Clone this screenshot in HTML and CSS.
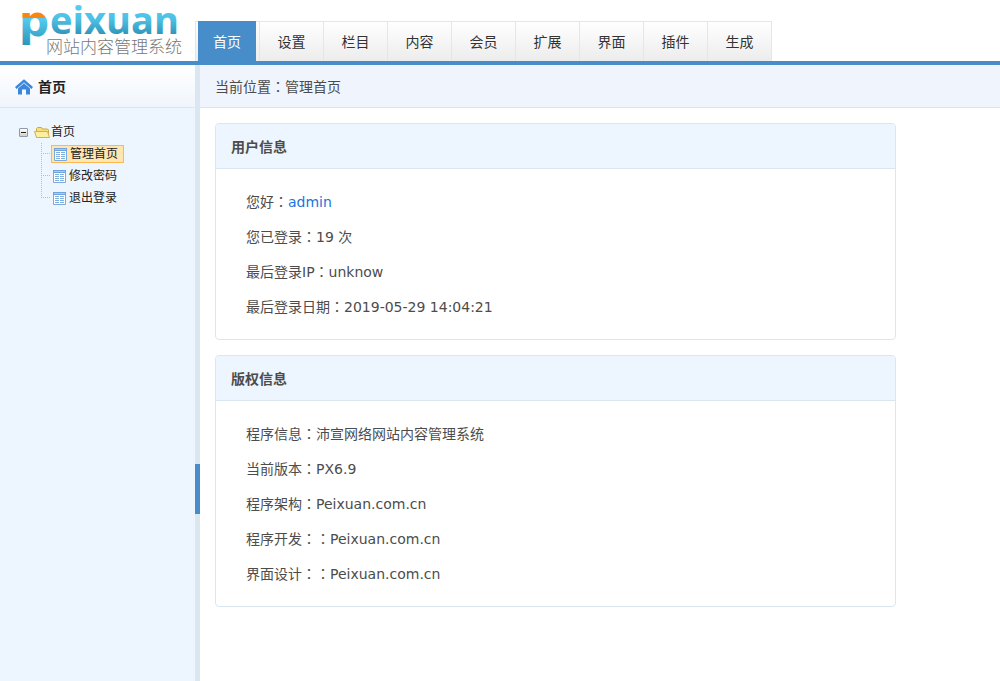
FILE: index.html
```html
<!DOCTYPE html>
<html lang="zh-CN">
<head>
<meta charset="utf-8">
<meta name="viewport" content="width=device-width, initial-scale=1">
<title>网站内容管理系统</title>
<link rel="stylesheet" href="styles.css">
</head>
<body>
<header class="top">
  <div class="brand">
    <svg class="logo" width="195" height="61" viewBox="0 0 195 61" role="img" aria-label="Peixuan 网站内容管理系统">
      <defs>
        <linearGradient id="blue" gradientUnits="userSpaceOnUse" x1="0" y1="6" x2="0" y2="45">
          <stop offset="0" stop-color="#55cdf0"/><stop offset="0.35" stop-color="#4cc0e4"/><stop offset="0.75" stop-color="#2f93b4"/><stop offset="1" stop-color="#389fc2"/>
        </linearGradient>
        <linearGradient id="lead" gradientUnits="userSpaceOnUse" x1="0" y1="12" x2="0" y2="46">
          <stop offset="0" stop-color="#fb8512"/><stop offset="0.17" stop-color="#fb8512"/><stop offset="0.17" stop-color="#55cdf0"/><stop offset="1" stop-color="#2c93b8"/>
        </linearGradient>
      </defs>
      <text class="logo-lead" x="19" y="36" fill="url(#lead)">p</text>
      <text class="logo-name" x="50" y="34" fill="url(#blue)">eixuan</text>
      <text class="logo-sub" x="46" y="53">网站内容管理系统</text>
    </svg>
  </div>
  <nav class="tabs">
    <a class="tab active" href="#">首页</a>
    <a class="tab" href="#">设置</a>
    <a class="tab" href="#">栏目</a>
    <a class="tab" href="#">内容</a>
    <a class="tab" href="#">会员</a>
    <a class="tab" href="#">扩展</a>
    <a class="tab" href="#">界面</a>
    <a class="tab" href="#">插件</a>
    <a class="tab" href="#">生成</a>
  </nav>
</header>
<svg width="0" height="0" class="symbols" aria-hidden="true">
  <symbol id="page" viewBox="0 0 13 13">
    <path fill="#fff" stroke="#7da9dc" d="M.5.5h12v12H.5z"/>
    <path fill="#6fa3dd" d="M0 0h13v3H0z"/><path fill="#a9ccf2" d="M1 1h11v1H1z"/>
    <path stroke="#7fb0e2" d="M2 4.500h4M7 4.500h4M2 6.500h4M7 6.500h4M2 8.500h4M7 8.500h4M2 10.500h4M7 10.500h4"/>
  </symbol>
</svg>
<div class="frame">
  <aside class="side">
    <h2 class="side-title">
      <svg width="18" height="16" viewBox="0 0 18 16" aria-hidden="true"><path fill="none" stroke="#3a87dc" stroke-width="2.400" d="M.8 9 9 1.800 17.200 9"/><path fill="#3a87dc" d="M3 9.500 9 4.300l6 5.200V15a.6.6 0 0 1-.6.6H11v-5H7v5H3.600A.6.6 0 0 1 3 15z"/></svg>
      首页
    </h2>
    <div class="tree">
      <div class="root">
        <button class="toggle" type="button" aria-label="折叠" aria-expanded="true"></button>
        <a class="root-link" href="#">
          <svg width="16" height="13" viewBox="0 0 16 13" aria-hidden="true"><path fill="#f6de79" stroke="#cba944" d="M2.500 11.500V2.500l1-1h4l1 1.500h5l1 1v7.500z"/><path fill="#fdeea0" stroke="#d2b04c" d="M.5 5.500h13l2 6h-13z"/></svg>
          首页
        </a>
      </div>
      <ul class="branch">
        <li><a class="leaf current" href="#"><svg width="13" height="13" aria-hidden="true"><use href="#page"/></svg>管理首页</a></li>
        <li><a class="leaf" href="#"><svg width="13" height="13" aria-hidden="true"><use href="#page"/></svg>修改密码</a></li>
        <li><a class="leaf" href="#"><svg width="13" height="13" aria-hidden="true"><use href="#page"/></svg>退出登录</a></li>
      </ul>
    </div>
  </aside>
  <div class="splitter"><button class="grip" type="button" aria-label="收起侧栏"></button></div>
  <main class="main">
    <div class="crumb">当前位置<span class="colon" lang="zh-TW">：</span>管理首页</div>
    <div class="panels">
      <section class="panel">
        <h3 class="panel-title">用户信息</h3>
        <div class="panel-body">
          <p>您好<span class="colon" lang="zh-TW">：</span><a class="user" href="#">admin</a></p>
          <p>您已登录<span class="colon" lang="zh-TW">：</span>19 次</p>
          <p>最后登录IP<span class="colon" lang="zh-TW">：</span>unknow</p>
          <p>最后登录日期<span class="colon" lang="zh-TW">：</span>2019-05-29 14:04:21</p>
        </div>
      </section>
      <section class="panel">
        <h3 class="panel-title">版权信息</h3>
        <div class="panel-body">
          <p>程序信息<span class="colon" lang="zh-TW">：</span>沛宣网络网站内容管理系统</p>
          <p>当前版本<span class="colon" lang="zh-TW">：</span>PX6.9</p>
          <p>程序架构<span class="colon" lang="zh-TW">：</span>Peixuan.com.cn</p>
          <p>程序开发<span class="colon" lang="zh-TW">：：</span>Peixuan.com.cn</p>
          <p>界面设计<span class="colon" lang="zh-TW">：：</span>Peixuan.com.cn</p>
        </div>
      </section>
    </div>
  </main>
</div>
</body>
</html>
```
FILE: styles.css
```css
* { box-sizing: border-box; }
body {
  margin: 0;
  min-height: 100vh;
  display: flex;
  flex-direction: column;
  background: #fff;
  color: #4c4c4c;
  font: 14px/20px "DejaVu Sans", "Noto Sans CJK SC", sans-serif;
  text-spacing-trim: space-all;
}
h2, h3, p, ul { margin: 0; padding: 0; }
h2, h3 { font-size: 14px; }
a { color: inherit; text-decoration: none; }
button { padding: 0; border: 0; }
svg { flex: none; }
.symbols { position: absolute; }
.colon { font-family: "Noto Sans CJK TC", sans-serif; line-height: 1; }

.top {
  display: flex;
  align-items: flex-end;
  border-bottom: 4px solid #478dca;
}
.brand { width: 195px; }
.logo { display: block; }
.logo-lead { font: bold 42px "DejaVu Sans", sans-serif; }
.logo-name { font: bold 38px "Open Sans", sans-serif; }
.logo-sub { font: 300 17px "Noto Sans CJK SC", sans-serif; fill: #777; }
.tabs {
  display: flex;
  height: 40px;
  border: solid #e6e6e6;
  border-width: 1px 0 0 1px;
  background: linear-gradient(#fff, #ececec);
}
.tab {
  width: 64px;
  border-right: 1px solid #e6e6e6;
  line-height: 40px;
  text-align: center;
  color: #333;
}
.tab.active {
  width: 58px;
  margin: -1px 3px 0 2px;
  border: 0;
  line-height: 42px;
  background: #478dca;
  color: #fff;
}
.tab.active + .tab { width: 65px; border-left: 1px solid #e6e6e6; }

.frame { flex: 1; display: flex; }
.side { width: 195px; background: #edf5fe; }
.side-title {
  display: flex;
  align-items: center;
  gap: 5px;
  height: 43px;
  padding: 2px 15px 0;
  border-bottom: 1px solid #dae5ee;
  background: linear-gradient(#fff, #f0f5fc);
  color: #222;
}
.tree { padding: 13px 19px; font-size: 12px; line-height: 22px; color: #222; }
.root, .root-link, .leaf { display: flex; align-items: center; }
.root-link { gap: 1px; }
.toggle {
  width: 9px;
  height: 9px;
  margin-right: 6px;
  border: 1px solid #8c9aab;
  border-radius: 1px;
  background: linear-gradient(#222, #222) center / 5px 1px no-repeat, linear-gradient(#fff, #d5d0c6);
}
.branch { list-style: none; margin-left: 22px; }
.branch li {
  display: flex;
  align-items: center;
  height: 22px;
  padding-left: 10px;
  background:
    repeating-linear-gradient(90deg, #bbb 0 1px, transparent 1px 2px) 0 10px / 9px 1px no-repeat,
    repeating-linear-gradient(#bbb 0 1px, transparent 1px 2px) 0 0 / 1px 100% no-repeat;
}
.branch li:last-child {
  background:
    repeating-linear-gradient(90deg, #bbb 0 1px, transparent 1px 2px) 0 10px / 9px 1px no-repeat,
    repeating-linear-gradient(#bbb 0 1px, transparent 1px 2px) 0 0 / 1px 10px no-repeat;
}
.leaf { gap: 3px; height: 18px; padding: 0 2px; }
.leaf.current { padding: 0 5px 0 2px; border: 1px solid #fdb950; background: #ffe6b0; }
.splitter { width: 5px; display: flex; flex-direction: column; background: #dae6f0; padding-top: 399px; }
.grip { height: 50px; background: #478dca; }

.main { flex: 1; min-width: 0; }
.crumb {
  height: 43px;
  padding: 1px 15px 0;
  border-bottom: 1px solid #dae5ee;
  background: #f0f5fd;
  line-height: 42px;
}
.panels { display: flex; flex-direction: column; gap: 15px; padding: 15px 13% 15px 15px; }
.panel { border: 1px solid #dae6f0; border-radius: 4px; overflow: hidden; }
.panel-title {
  height: 45px;
  padding: 0 15px;
  border-bottom: 1px solid #dae6f0;
  background: #edf5fe;
  line-height: 46px;
}
.panel-body { padding: 16px 30px 14px; line-height: 35px; }
.user { color: #1a73dd; }
```
